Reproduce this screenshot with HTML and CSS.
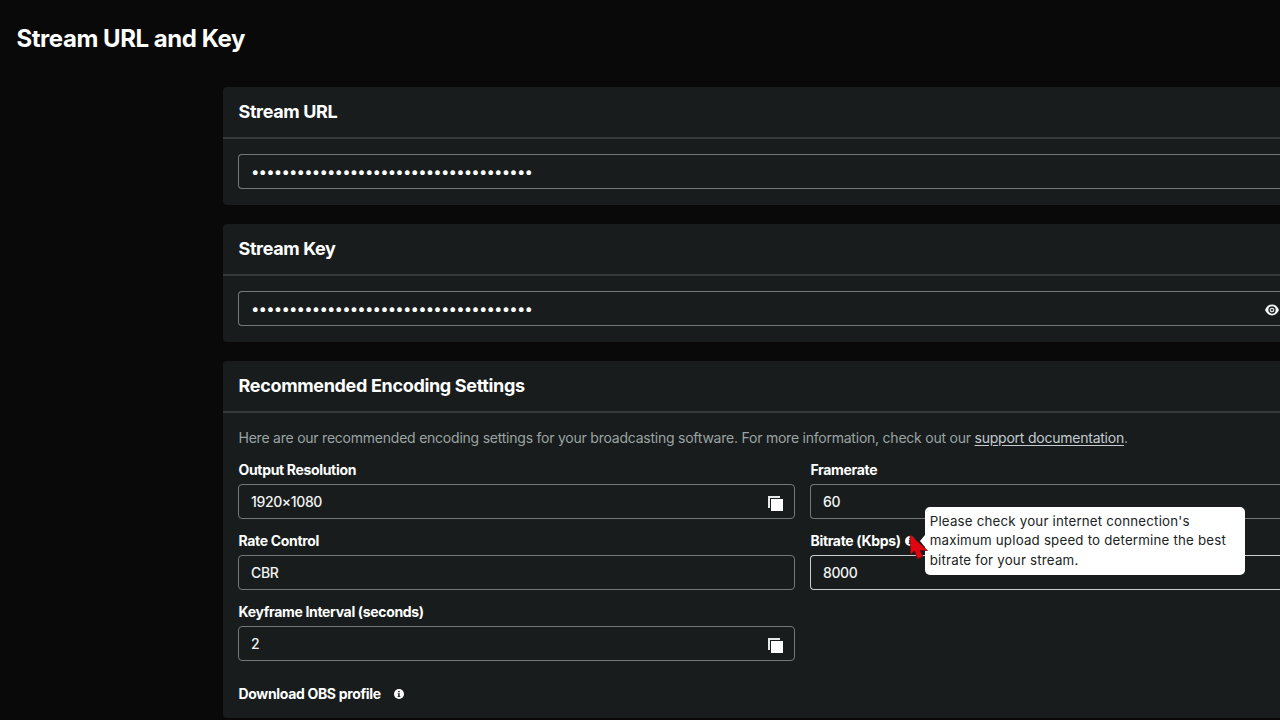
FILE: index.html
```html
<!DOCTYPE html>
<html lang="en">
<head>
<meta charset="utf-8">
<title>Stream URL and Key</title>
<link rel="stylesheet" href="styles.css">
</head>
<body>
<h1 class="page-title">Stream URL and Key</h1>
<main class="cards">
  <section class="card">
    <h2 class="card-title">Stream URL</h2>
    <div class="card-body"><div class="input secret"><span class="dots">•••••••••••••••••••••••••••••••••••••</span></div></div>
  </section>
  <section class="card">
    <h2 class="card-title">Stream Key</h2>
    <div class="card-body"><div class="input secret"><span class="dots">•••••••••••••••••••••••••••••••••••••</span>
      <svg class="eye" viewBox="0 0 14 12"><path d="M0 6Q2.400.6 7 .6T14 6Q11.600 11.400 7 11.400T0 6Z" fill="#f4f5f5"/><circle cx="7" cy="6" r="3" fill="#f4f5f5" stroke="#182020" stroke-width="1.300"/><circle cx="7" cy="6" r="1.300" fill="#3c4444"/></svg></div></div>
  </section>
  <section class="card settings">
    <h2 class="card-title wide">Recommended Encoding Settings</h2>
    <div class="card-body">
      <p class="intro">Here are our recommended encoding settings for your broadcasting software. For more information, check out our <a class="link">support documentation</a>.</p>
      <div class="grid">
        <div class="field"><div class="label">Output Resolution</div><div class="input"><span class="value">1920×1080</span><svg class="copy" viewBox="0 0 15 15"><path d="M0 0h12v2H2v10H0z" fill="#e6e9e9"/><path d="M3 3h12v12H3z" fill="#fff"/></svg></div></div>
        <div class="field"><div class="label">Framerate</div><div class="input open"><span class="value">60</span></div></div>
        <div class="field"><div class="label">Rate Control</div><div class="input"><span class="value">CBR</span></div></div>
        <div class="field"><div class="label bitrate">Bitrate (Kbps)
          <span class="hint"><svg class="info" viewBox="0 0 10 10"><circle cx="5" cy="5" r="5" fill="#fff"/><path d="M4.200 2h1.600v1.300H4.200zM3.700 4.200h2v3h.7v.9H3.600v-.9h.6V5.100h-.5z" fill="#182020"/></svg>
            <span class="tooltip"><span>Please check your internet connection's</span><span>maximum upload speed to determine the best</span><span>bitrate for your stream.</span></span>
            <svg class="cursor" viewBox="0 0 19 26"><path d="M1 .5 1.500 20.500 5.500 17 8.500 25 14 22.500 11 16.500 18.500 16.500Z" fill="#e00510" stroke="#610d10" stroke-width=".7"/></svg>
          </span></div><div class="input open active"><span class="value">8000</span></div></div>
        <div class="field"><div class="label">Keyframe Interval (seconds)</div><div class="input"><span class="value">2</span><svg class="copy" viewBox="0 0 15 15"><path d="M0 0h12v2H2v10H0z" fill="#e6e9e9"/><path d="M3 3h12v12H3z" fill="#fff"/></svg></div></div>
      </div>
      <div class="download"><span>Download OBS profile</span><svg class="info" viewBox="0 0 10 10"><circle cx="5" cy="5" r="5" fill="#fff"/><path d="M4.200 2h1.600v1.300H4.200zM3.700 4.200h2v3h.7v.9H3.600v-.9h.6V5.100h-.5z" fill="#182020"/></svg></div>
    </div>
  </section>
</main>
</body>
</html>
```
FILE: styles.css
```css
* { box-sizing: border-box; }
body { margin: 0; height: 720px; overflow: hidden; background: #090909; color: #fff; font-family: Inter, "Liberation Sans", sans-serif; }
.page-title { margin: 0; height: 87px; padding: 24px 16.500px 0; font-size: 24px; line-height: 30px; font-weight: 700; letter-spacing: -0.45px; }
.cards { display: flex; flex-direction: column; gap: 19px; margin-left: 223px; }
.card { height: 118px; background: #181c1c; border-radius: 4px 0 0 4px; }
.card.settings { height: 357px; }
.card-title { margin: 0; height: 52px; padding: 13px 15px 0 15.500px; border-bottom: 2px solid #343a3a; font-size: 18px; line-height: 24px; font-weight: 700; letter-spacing: -0.38px; }
.card-title.wide { letter-spacing: -0.33px; }
.card-body { padding: 15px 0 0 15px; }
.input { display: flex; align-items: center; justify-content: space-between; width: 100%; height: 35px; padding: 0 11px 0 12px; border: 1px solid #747878; border-radius: 4px; }
.input.active { border-color: #c9cccc; }
.secret, .open { border-right: 0; border-radius: 4px 0 0 4px; }
.secret { padding-right: 1px; }
.dots { font-size: 15px; line-height: 20px; letter-spacing: -.84px; padding-top: 1px; }
.value { color: #f3f4f4; font-size: 14px; line-height: 20px; font-weight: 500; letter-spacing: -.37px; padding-top: 1px; }
.intro { margin: 0; height: 35px; padding-left: .5px; color: #9ba4a3; font-size: 14px; line-height: 20px; letter-spacing: -.23px; }
.link { color: #c4cbd0; text-decoration: underline; text-underline-offset: 2px; }
.grid { display: grid; grid-template-columns: 557px 1fr; column-gap: 15px; padding-top: 1px; }
.field { height: 71.200px; }
.label { height: 25px; padding: 1px 0 0 .5px; margin-top: -5px; font-size: 14px; line-height: 20px; font-weight: 700; letter-spacing: -.33px; }
.label.bitrate { display: flex; align-items: baseline; gap: 4px; }
.hint { position: relative; display: inline-flex; }
.info { display: block; width: 10px; height: 10px; }
.tooltip { position: absolute; z-index: 2; left: 20px; top: -29px; width: 320px; height: 68px; padding: 5px 5px; display: flex; flex-direction: column; background: #fff; border-radius: 5px; color: #202323; font-size: 13.300px; line-height: 19.200px; font-weight: 400; letter-spacing: .2px; white-space: nowrap; }
.tooltip::before { content: ""; position: absolute; left: -5px; top: 28px; border: 6px solid transparent; border-left: 0; border-right: 5px solid #fff; }
.cursor { position: absolute; z-index: 3; left: 4px; top: -2px; width: 19px; height: 26px; }
.eye { width: 14px; height: 12px; margin-top: 3px; }
.copy { width: 15px; height: 15px; margin-top: 4px; }
.download { display: flex; align-items: center; gap: 13px; padding: 6.600px 0 0 .5px; font-size: 14px; line-height: 20px; font-weight: 700; letter-spacing: -.33px; }
```
